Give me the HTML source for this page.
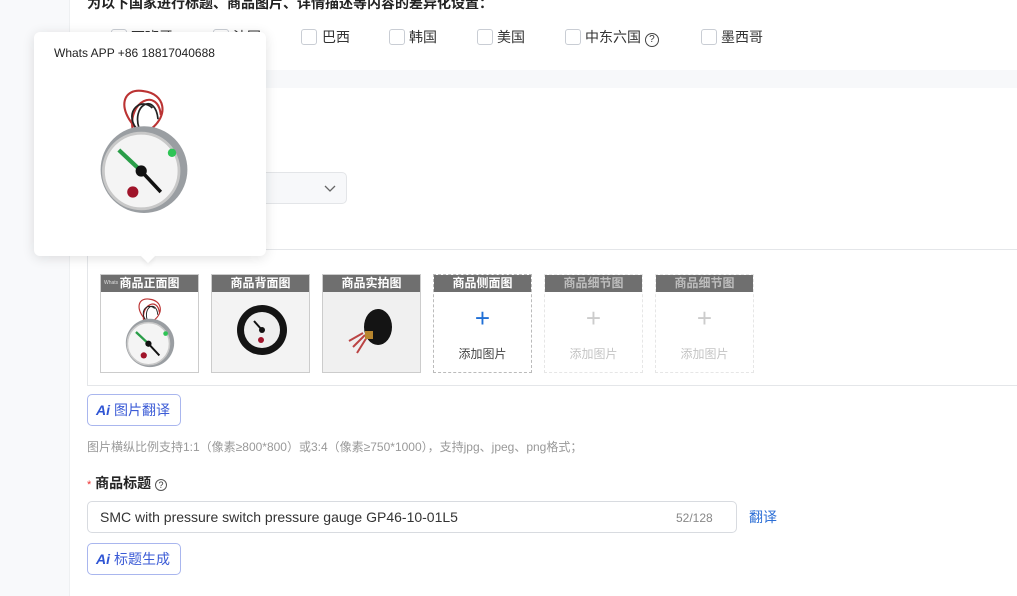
<!DOCTYPE html>
<html><head><meta charset="utf-8">
<style>
*{box-sizing:border-box;margin:0;padding:0}
body{width:1017px;height:596px;overflow:hidden;background:#fff;font-family:"Liberation Sans","Noto Sans CJK SC",sans-serif;position:relative;color:#333}
.abs{position:absolute}
.side{left:0;top:0;width:70px;height:596px;background:#f8f9fb;border-right:1px solid #eef0f2}
.cb{position:absolute;top:29px;width:16px;height:16px;border:1px solid #c9cdd4;border-radius:3px;background:#fff}
.lbl{position:absolute;top:28px;font-size:14px;color:#333;line-height:18px}
.tile{position:absolute;top:274px;width:99px;height:99px;border:1px solid #ccc;background:#fff;overflow:hidden}
.tile .h{height:17px;background:#6f6f6f;color:#fff;font-size:12px;text-align:center;line-height:17px;font-weight:bold}
.tile.d{border:1px dashed #bbb}
.tile.e{border:1px dashed #e6e6e6}
.tile.e .h{color:#bdbdbd}
.plus{position:absolute;left:0;right:0;top:28px;text-align:center;font-size:26px;line-height:30px}
.add{position:absolute;left:0;right:0;top:70px;text-align:center;font-size:12px}
.ai{position:absolute;left:87px;width:94px;height:32px;border:1px solid #a9b6ee;border-radius:5px;font-size:14px;color:#3b5bd6;line-height:30px;padding-left:8px}
.ai b{font-style:italic;font-weight:900;color:#2f55d4;margin-right:4px}
</style></head><body>
<svg width="0" height="0" style="position:absolute">
<defs>
<symbol id="g" viewBox="0 0 100 100">
<path d="M45 35 C30 20 35 5 50 8 C65 10 68 25 55 35 M42 36 C38 15 60 5 62 25" fill="none" stroke="#b33" stroke-width="1.5"/>
<path d="M47 36 C40 18 58 8 60 28 M44 34 C36 22 48 12 56 20" fill="none" stroke="#222" stroke-width="1.2"/>
<ellipse cx="50" cy="64" rx="31" ry="31" fill="#9a9ea2"/>
<circle cx="48" cy="65" r="27" fill="#f4f4f4" stroke="#c8c8c8" stroke-width="2"/>
<path d="M32 50 L48 65" stroke="#2a9d48" stroke-width="3"/>
<path d="M48 65 L62 80" stroke="#111" stroke-width="2.5"/>
<circle cx="48" cy="65" r="4" fill="#111"/>
<circle cx="42" cy="80" r="4" fill="#a0142a"/>
<circle cx="70" cy="52" r="3" fill="#2ec455"/>
</symbol>
</defs></svg>

<div class="abs side"></div>
<div class="abs" style="left:70px;top:70px;width:947px;height:18px;background:#f7f8fa"></div>

<div class="abs" style="left:87px;top:-7px;font-size:14px;font-weight:bold;color:#222;white-space:nowrap">为以下国家进行标题、商品图片、详情描述等内容的差异化设置：</div>

<div class="cb" style="left:111px"></div><div class="lbl" style="left:131px">西班牙</div>
<div class="cb" style="left:213px"></div><div class="lbl" style="left:233px">法国</div>
<div class="cb" style="left:301px"></div><div class="lbl" style="left:322px">巴西</div>
<div class="cb" style="left:389px"></div><div class="lbl" style="left:409px">韩国</div>
<div class="cb" style="left:477px"></div><div class="lbl" style="left:497px">美国</div>
<div class="cb" style="left:565px"></div><div class="lbl" style="left:585px">中东六国 <span style="display:inline-block;width:14px;height:14px;border:1.3px solid #444;border-radius:50%;font-size:10px;line-height:12px;text-align:center;vertical-align:0">?</span></div>
<div class="cb" style="left:701px"></div><div class="lbl" style="left:721px">墨西哥</div>

<div class="abs" style="left:200px;top:172px;width:147px;height:32px;border:1px solid #e3e5e8;border-radius:5px;background:#f7f8fa"></div>
<svg class="abs" style="left:324px;top:183px" width="12" height="10"><path d="M1 3 L6 8 L11 3" fill="none" stroke="#666" stroke-width="1.3"/></svg>

<div class="abs" style="left:87px;top:249px;width:930px;height:137px;border-top:1px solid #e4e6e9;border-left:1px solid #e4e6e9;border-bottom:1px solid #e4e6e9"></div>

<div class="tile" style="left:100px"><div class="h"><span style="font-size:5px;font-weight:normal;color:#ddd;position:absolute;left:3px">Whats</span>商品正面图</div>
<svg style="position:absolute;left:10px;top:16px" width="78" height="82"><use href="#g"/></svg></div>
<div class="tile" style="left:211px;background:#f3f3f3"><div class="h">商品背面图</div>
<svg style="position:absolute;left:20px;top:24px" width="60" height="60" viewBox="0 0 60 60"><circle cx="30" cy="31" r="25" fill="#141414"/><circle cx="30" cy="31" r="18" fill="#eee"/><path d="M30 31 L22 22" stroke="#111" stroke-width="2"/><circle cx="30" cy="31" r="3" fill="#111"/><circle cx="29" cy="41" r="3" fill="#a0142a"/></svg></div>
<div class="tile" style="left:322px;background:#f0f0f0"><div class="h">商品实拍图</div>
<svg style="position:absolute;left:20px;top:22px" width="60" height="70" viewBox="0 0 60 70"><ellipse cx="35" cy="30" rx="14" ry="18" fill="#141414"/><path d="M22 38 L10 50 M24 40 L14 56 M20 36 L6 44" stroke="#b44" stroke-width="2"/><rect x="22" y="34" width="8" height="8" fill="#b8862e"/></svg></div>
<div class="tile d" style="left:433px"><div class="h">商品侧面图</div><div class="plus" style="color:#1f6fd6">+</div><div class="add" style="color:#444">添加图片</div></div>
<div class="tile e" style="left:544px"><div class="h">商品细节图</div><div class="plus" style="color:#ccc">+</div><div class="add" style="color:#c4c4c4">添加图片</div></div>
<div class="tile e" style="left:655px"><div class="h">商品细节图</div><div class="plus" style="color:#ccc">+</div><div class="add" style="color:#c4c4c4">添加图片</div></div>

<div class="ai" style="top:394px"><b>Ai</b>图片翻译</div>
<div class="abs" style="left:87px;top:438px;font-size:12px;color:#999;white-space:nowrap">图片横纵比例支持1:1（像素≥800*800）或3:4（像素≥750*1000），支持jpg、jpeg、png格式；</div>

<div class="abs" style="left:87px;top:473px;font-size:14px;white-space:nowrap"><span style="color:#e33;font-size:11px">*</span> <b style="color:#222">商品标题</b> <span style="display:inline-block;width:12px;height:12px;border:1px solid #555;border-radius:50%;font-size:9px;line-height:10px;text-align:center;vertical-align:0">?</span></div>

<div class="abs" style="left:87px;top:501px;width:650px;height:32px;border:1px solid #d8dbe0;border-radius:5px"></div>
<div class="abs" style="left:100px;top:509px;font-size:14px;color:#333">SMC with pressure switch pressure gauge GP46-10-01L5</div>
<div class="abs" style="left:676px;top:511px;font-size:12px;color:#888">52/128</div>
<div class="abs" style="left:749px;top:507px;font-size:14px;color:#2d6fd6">翻译</div>

<div class="ai" style="top:543px"><b>Ai</b>标题生成</div>

<div class="abs" style="left:34px;top:32px;width:232px;height:224px;background:#fff;border-radius:6px;box-shadow:0 2px 12px rgba(0,0,0,0.12)">
<div style="position:absolute;left:20px;top:14px;font-size:12px;color:#222">Whats APP +86 18817040688</div>
<svg style="position:absolute;left:40px;top:38px" width="140" height="160"><use href="#g"/></svg>
</div>
<div class="abs" style="left:143px;top:251px;width:10px;height:10px;background:#fff;transform:rotate(45deg);box-shadow:2px 2px 4px rgba(0,0,0,0.06)"></div>
</body></html>
